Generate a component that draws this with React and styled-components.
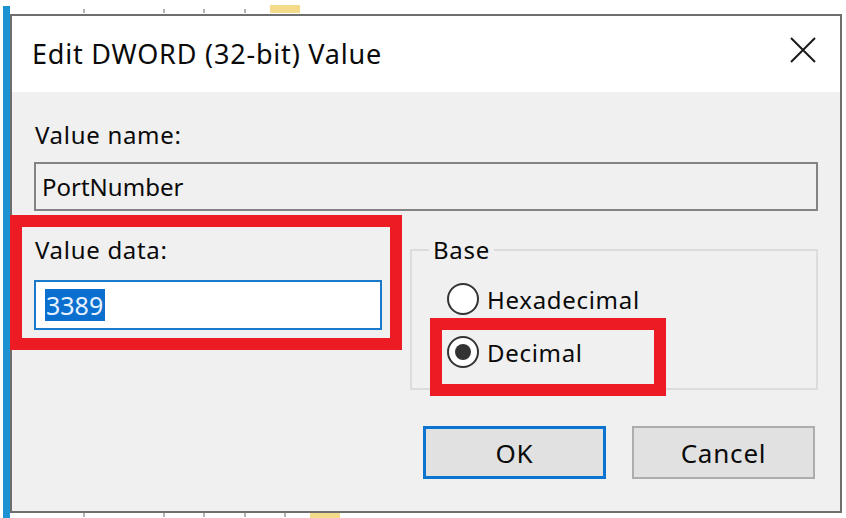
import React from 'react';
import styled, { createGlobalStyle } from 'styled-components';

const GlobalStyle = createGlobalStyle`
  html, body {
    margin: 0;
    padding: 0;
    background: #ffffff;
  }
  body {
    font-family: "Noto Sans", "Open Sans", sans-serif;
    color: #0a0a0a;
  }
  * {
    box-sizing: border-box;
  }
`;

const Page = styled.div`
  width: 846px;
  height: 518px;
  display: flex;
  background: #ffffff;
  overflow: hidden;
`;

const AccentStrip = styled.div`
  width: 7px;
  margin: 6px 0 0 3px;
  background: #1b93d3;
`;

const Stage = styled.div`
  width: 836px;
  display: flex;
  flex-direction: column;
`;

const Ruler = styled.div`
  height: ${(p) => p.$height}px;
  display: flex;
  align-items: ${(p) => (p.$bottom ? 'flex-start' : 'flex-end')};
  padding-bottom: ${(p) => (p.$bottom ? 0 : 1)}px;
`;

const Tick = styled.span`
  width: ${(p) => (p.$mark ? 30 : 2)}px;
  height: ${(p) => (p.$mark ? 8 : 4)}px;
  margin-left: ${(p) => p.$gap}px;
  background: ${(p) => (p.$mark ? '#f3d77c' : '#666')};
  opacity: ${(p) => (p.$mark ? 0.9 : 0.5)};
`;

const Window = styled.div`
  width: 832px;
  height: 499px;
  border: 2px solid #6e6e6e;
  display: flex;
  flex-direction: column;
`;

const TitleBar = styled.div`
  height: 76px;
  background: #ffffff;
  display: flex;
  align-items: center;
  justify-content: space-between;
  padding: 0 23px 0 20px;
`;

const Title = styled.span`
  font-size: 27px;
  line-height: 30px;
  letter-spacing: 0.8px;
  margin-top: -1px;
`;

const CloseIcon = styled.svg`
  width: 28px;
  height: 28px;
  margin-top: -8px;
`;

const Body = styled.div`
  flex: 1;
  position: relative;
  background: #f0f0f0;
  padding: 30px 22px 0 22px;
  display: flex;
  flex-direction: column;
`;

const Label = styled.div`
  font-size: 24px;
  line-height: 26px;
  letter-spacing: 0.7px;
  padding-left: 1px;
`;

const ReadOnlyField = styled.div`
  height: 49px;
  margin-top: 14px;
  border: 2px solid #838383;
  background: #f0f0f0;
  display: flex;
  align-items: center;
  padding-left: 6px;
  font-size: 24px;
`;

const LowerGrid = styled.div`
  display: grid;
  grid-template-columns: 348px 408px;
  column-gap: 28px;
  margin-top: 26px;
  align-items: start;
`;

const DataColumn = styled.div`
  display: flex;
  flex-direction: column;
  gap: 17px;
`;

const EditBox = styled.div`
  height: 50px;
  border: 2px solid #1979ca;
  background: #ffffff;
  display: flex;
  align-items: center;
  padding-left: 9px;
`;

const Selected = styled.span`
  background: #0a6fcf;
  color: #e8f1ff;
  font-size: 25px;
  line-height: 32px;
  padding: 0 2px 0 1px;
`;

const GroupBox = styled.fieldset`
  margin: 0;
  height: 153px;
  border: 2px solid #dcdcdc;
  padding: 20px 0 0 35px;
  display: flex;
  flex-direction: column;
  gap: 21px;
`;

const Legend = styled.legend`
  font-size: 24px;
  line-height: 26px;
  letter-spacing: 0.7px;
  padding: 0 4px;
  margin-left: -18px;
`;

const RadioRow = styled.label`
  display: flex;
  align-items: center;
  gap: 8px;
  height: 32px;
  font-size: 24px;
  letter-spacing: 0.7px;
`;

const RadioCircle = styled.span`
  width: 32px;
  height: 32px;
  border-radius: 50%;
  border: 2px solid #333;
  background: #ffffff;
  display: flex;
  align-items: center;
  justify-content: center;

  &::after {
    content: '';
    width: 16px;
    height: 16px;
    border-radius: 50%;
    background: #333;
    display: ${(p) => (p.$checked ? 'block' : 'none')};
  }
`;

const ButtonRow = styled.div`
  display: flex;
  justify-content: flex-end;
  gap: 26px;
  margin-top: 36px;
  margin-right: 3px;
`;

const Button = styled.div`
  width: 183px;
  height: 53px;
  background: #e1e1e1;
  border: ${(p) => (p.$default ? '3px solid #0a74d0' : '2px solid #adadad')};
  display: flex;
  align-items: center;
  justify-content: center;
  font-size: 26px;
  letter-spacing: 0.8px;
`;

const Annotation = styled.div`
  position: absolute;
  left: ${(p) => p.$left}px;
  top: ${(p) => p.$top}px;
  width: ${(p) => p.$width}px;
  height: ${(p) => p.$height}px;
  border: 12px solid #ec1b24;
  pointer-events: none;
`;

const topTicks = [
  { gap: 73 },
  { gap: 78 },
  { gap: 38 },
  { gap: 39 },
  { gap: 24, mark: true },
];

const bottomTicks = [
  { gap: 73 },
  { gap: 78 },
  { gap: 38 },
  { gap: 39 },
  { gap: 38 },
  { gap: 24, mark: true },
];

export default function App() {
  return (
    <>
      <GlobalStyle />
      <Page>
        <AccentStrip />
        <Stage>
          <Ruler $height={14}>
            {topTicks.map((t, i) => (
              <Tick key={i} $gap={t.gap} $mark={t.mark} />
            ))}
          </Ruler>
          <Window>
            <TitleBar>
              <Title>Edit DWORD (32-bit) Value</Title>
              <CloseIcon viewBox="0 0 28 28">
                <path d="M2 2 L26 26 M26 2 L2 26" stroke="#1a1a1a" strokeWidth="2" fill="none" />
              </CloseIcon>
            </TitleBar>
            <Body>
              <Label>Value name:</Label>
              <ReadOnlyField>PortNumber</ReadOnlyField>
              <LowerGrid>
                <DataColumn>
                  <Label>Value data:</Label>
                  <EditBox>
                    <Selected>3389</Selected>
                  </EditBox>
                </DataColumn>
                <GroupBox>
                  <Legend>Base</Legend>
                  <RadioRow>
                    <RadioCircle />
                    Hexadecimal
                  </RadioRow>
                  <RadioRow>
                    <RadioCircle $checked />
                    Decimal
                  </RadioRow>
                </GroupBox>
              </LowerGrid>
              <ButtonRow>
                <Button $default>OK</Button>
                <Button>Cancel</Button>
              </ButtonRow>
              <Annotation $left={-2} $top={123} $width={392} $height={135} />
              <Annotation $left={418} $top={226} $width={236} $height={78} />
            </Body>
          </Window>
          <Ruler $height={5} $bottom>
            {bottomTicks.map((t, i) => (
              <Tick key={i} $gap={t.gap} $mark={t.mark} />
            ))}
          </Ruler>
        </Stage>
      </Page>
    </>
  );
}
